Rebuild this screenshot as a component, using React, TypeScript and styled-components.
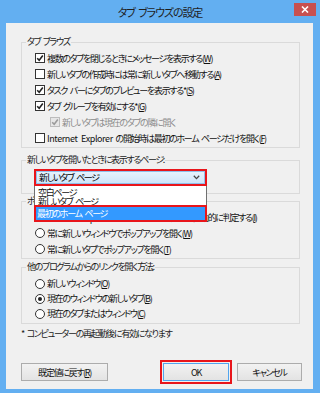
import styled, { createGlobalStyle } from 'styled-components';

const GlobalStyle = createGlobalStyle`
  html, body {
    margin: 0;
    padding: 0;
    width: 320px;
    height: 393px;
    overflow: hidden;
    background: #63aff1;
  }
  body {
    font-family: "Noto Sans CJK JP", "Noto Sans", sans-serif;
    font-size: 9px;
    font-feature-settings: "palt";
    letter-spacing: -1.3px;
    word-spacing: 2px;
    color: #000;
  }
  * { box-sizing: border-box; }
`;

function CheckMark({ color = '#222' }: { color?: string }) {
  return (
    <svg width="8" height="8" viewBox="0 0 8 8">
      <path d="M1.2 4.2 L3.2 6.2 L6.8 1.6" fill="none" stroke={color} strokeWidth="1.6" />
    </svg>
  );
}

function CheckRow({
  checked,
  disabled,
  indent,
  children,
}: {
  checked?: boolean;
  disabled?: boolean;
  indent?: boolean;
  children: React.ReactNode;
}) {
  return (
    <Row $indent={indent} $disabled={disabled}>
      <CheckBox $disabled={disabled}>
        {checked && <CheckMark color={disabled ? '#9a9a9a' : '#222'} />}
      </CheckBox>
      <span>{children}</span>
    </Row>
  );
}

function RadioRow({ checked, children, $h }: { checked?: boolean; children: React.ReactNode; $h?: number }) {
  return (
    <Row $h={$h}>
      <Radio>{checked && <RadioDot />}</Radio>
      <span>{children}</span>
    </Row>
  );
}

export default function App() {
  return (
    <>
      <GlobalStyle />
      <Window>
        <TitleBar>
          <Title>タブ ブラウズの設定</Title>
          <CloseButton>
            <svg width="8" height="7" viewBox="0 0 8 7">
              <path d="M1 0.5 L7 6.5 M7 0.5 L1 6.5" stroke="#fff" strokeWidth="1.6" />
            </svg>
          </CloseButton>
        </TitleBar>

        <Client>
          <GroupBox>
            <Legend>タブ ブラウズ</Legend>
            <CheckRow checked>
              複数のタブを閉じるときにメッセージを表示する(<u>W</u>)
            </CheckRow>
            <CheckRow>
              新しいタブの作成時には常に新しいタブへ移動する(<u>A</u>)
            </CheckRow>
            <CheckRow checked>
              タスク バーにタブのプレビューを表示する*(<u>S</u>)
            </CheckRow>
            <CheckRow checked>
              タブ グループを有効にする*(<u>G</u>)
            </CheckRow>
            <CheckRow checked disabled indent>
              新しいタブは現在のタブの隣に開く
            </CheckRow>
            <CheckRow>
              <Latin>Internet Explorer</Latin> の開始時は最初のホーム ページだけを開く(<u>F</u>)
            </CheckRow>
          </GroupBox>

          <GroupBox $raised>
            <Legend>新しいタブを開いたときに表示するページ:</Legend>
            <ComboWrap>
              <Combo>
                <span>新しいタブ ページ</span>
                <svg width="7" height="5" viewBox="0 0 7 5">
                  <path d="M0.8 0.8 L3.5 3.6 L6.2 0.8" fill="none" stroke="#444" strokeWidth="1.3" />
                </svg>
              </Combo>
              <DropList>
                <ListItem>空白ページ</ListItem>
                <ListItem>新しいタブ ページ</ListItem>
                <ListItem $selected>最初のホーム ページ</ListItem>
              </DropList>
            </ComboWrap>
          </GroupBox>

          <GroupBox>
            <Legend>ポップアップの発生時:</Legend>
            <RadioRow checked>
              <Latin>Internet Explorer</Latin> でポップアップの表示を自動的に判定する(<u>I</u>)
            </RadioRow>
            <RadioRow>
              常に新しいウィンドウでポップアップを開く(<u>W</u>)
            </RadioRow>
            <RadioRow>
              常に新しいタブでポップアップを開く(<u>T</u>)
            </RadioRow>
          </GroupBox>

          <GroupBox $gap={1} $tight>
            <Legend>他のプログラムからのリンクを開く方法:</Legend>
            <RadioRow $h={15}>
              新しいウィンドウ(<u>O</u>)
            </RadioRow>
            <RadioRow checked $h={15}>
              現在のウィンドウの新しいタブ(<u>B</u>)
            </RadioRow>
            <RadioRow $h={15}>
              現在のタブまたはウィンドウ(<u>C</u>)
            </RadioRow>
          </GroupBox>

          <Note>* コンピューターの再起動後に有効になります</Note>

          <ButtonRow>
            <Button $w={87}>
              既定値に戻す(<u>R</u>)
            </Button>
            <Highlight>
              <Button $w={66} $default>
                OK
              </Button>
            </Highlight>
            <Button $w={65}>キャンセル</Button>
          </ButtonRow>
        </Client>
      </Window>
    </>
  );
}

const Window = styled.div`
  width: 320px;
  height: 393px;
  background: #63aff1;
  display: flex;
  flex-direction: column;
`;

const TitleBar = styled.div`
  height: 23px;
  display: grid;
  grid-template-columns: 1fr auto 1fr;
  align-items: start;
`;

const Title = styled.div`
  grid-column: 2;
  margin-top: 5px;
  font-size: 11px;
  line-height: 15px;
  letter-spacing: -1.1px;
  color: #1e1e1e;
`;

const CloseButton = styled.div`
  grid-column: 3;
  justify-self: end;
  margin: 3px 4px 0 0;
  width: 22px;
  height: 13px;
  background: #c75050;
  display: flex;
  align-items: center;
  justify-content: center;
`;

const Client = styled.div`
  flex: 1;
  margin: 0 7px 4px 6px;
  background: #f0f0f0;
  padding: 12px 13px 0 15px;
  display: flex;
  flex-direction: column;
`;

const GroupBox = styled.fieldset<{ $raised?: boolean; $gap?: number; $tight?: boolean }>`
  position: relative;
  z-index: ${(p) => (p.$raised ? 2 : 1)};
  margin: ${(p) => (p.$gap ?? 0)}px 0 0 0;
  padding: ${(p) => (p.$tight ? '2px 0 2px 4px' : '1px 0 1px 4px')};
  border: 1px solid #dadada;
  min-width: 0;

  &:nth-of-type(2) {
    margin-top: 5px;
    padding-bottom: 7px;
  }
`;

const Legend = styled.legend`
  padding: 0 1px;
  line-height: 14px;
  color: #1a1a1a;
`;

const Latin = styled.span`
  letter-spacing: -0.4px;
`;

const Row = styled.label<{ $indent?: boolean; $disabled?: boolean; $h?: number }>`
  display: flex;
  align-items: center;
  gap: 2px;
  height: ${(p) => p.$h ?? 16}px;
  margin-left: ${(p) => (p.$indent ? 24 : 9)}px;
  white-space: nowrap;
  color: ${(p) => (p.$disabled ? '#8a8a8a' : '#111')};

  u {
    text-decoration: underline;
    text-underline-offset: 1px;
  }
`;

const CheckBox = styled.span<{ $disabled?: boolean }>`
  width: 10px;
  height: 10px;
  flex: none;
  border: 1px solid ${(p) => (p.$disabled ? '#bcbcbc' : '#333')};
  background: ${(p) => (p.$disabled ? '#e6e6e6' : '#fff')};
  display: flex;
  align-items: center;
  justify-content: center;
`;

const Radio = styled.span`
  width: 10px;
  height: 10px;
  flex: none;
  border: 1px solid #333;
  border-radius: 50%;
  background: #fff;
  display: flex;
  align-items: center;
  justify-content: center;
`;

const RadioDot = styled.span`
  width: 4px;
  height: 4px;
  border-radius: 50%;
  background: #222;
`;

const ComboWrap = styled.div`
  position: relative;
  margin: 1px 0 0 8px;
  width: 173px;
  height: 17px;
  border: 2px solid #e8151b;
`;

const Combo = styled.div`
  height: 100%;
  padding: 0 4px 0 2px;
  display: flex;
  align-items: center;
  justify-content: space-between;
  background: linear-gradient(#e6f2fc, #cfe6fa);
  border: 1px solid #8fc0ec;
  line-height: 11px;
`;

const DropList = styled.div`
  position: absolute;
  top: 15px;
  left: -2px;
  width: 173px;
  background: #fff;
  border: 1px solid #707070;
  border-top: none;
  padding-top: 2px;
  display: flex;
  flex-direction: column;
`;

const ListItem = styled.div<{ $selected?: boolean }>`
  position: relative;
  height: ${(p) => (p.$selected ? 17 : 9)}px;
  line-height: ${(p) => (p.$selected ? 13 : 9)}px;
  padding-left: ${(p) => (p.$selected ? 1 : 3)}px;
  color: ${(p) => (p.$selected ? '#fff' : '#111')};
  background: ${(p) => (p.$selected ? '#3399ff' : 'transparent')};
  border: ${(p) => (p.$selected ? '2px solid #e8151b' : 'none')};
  margin: ${(p) => (p.$selected ? '-1px -1px -1px -1px' : '0')};
`;

const Note = styled.div`
  margin-top: 3px;
  line-height: 14px;
  color: #1a1a1a;
`;

const ButtonRow = styled.div`
  margin: 19px -2px 0 0;
  height: 24px;
  display: flex;
  align-items: center;
  gap: 5px;
`;

const Highlight = styled.div`
  margin-left: auto;
  padding: 1px;
  border: 2px solid #e8151b;
  display: flex;
`;

const Button = styled.div<{ $w: number; $default?: boolean }>`
  width: ${(p) => p.$w}px;
  height: 18px;
  border: 1px solid ${(p) => (p.$default ? '#52a5ee' : '#acacac')};
  background: linear-gradient(#f2f2f2, #e3e3e3);
  display: flex;
  align-items: center;
  justify-content: center;
  color: #111;

  u {
    text-underline-offset: 1px;
  }
`;
